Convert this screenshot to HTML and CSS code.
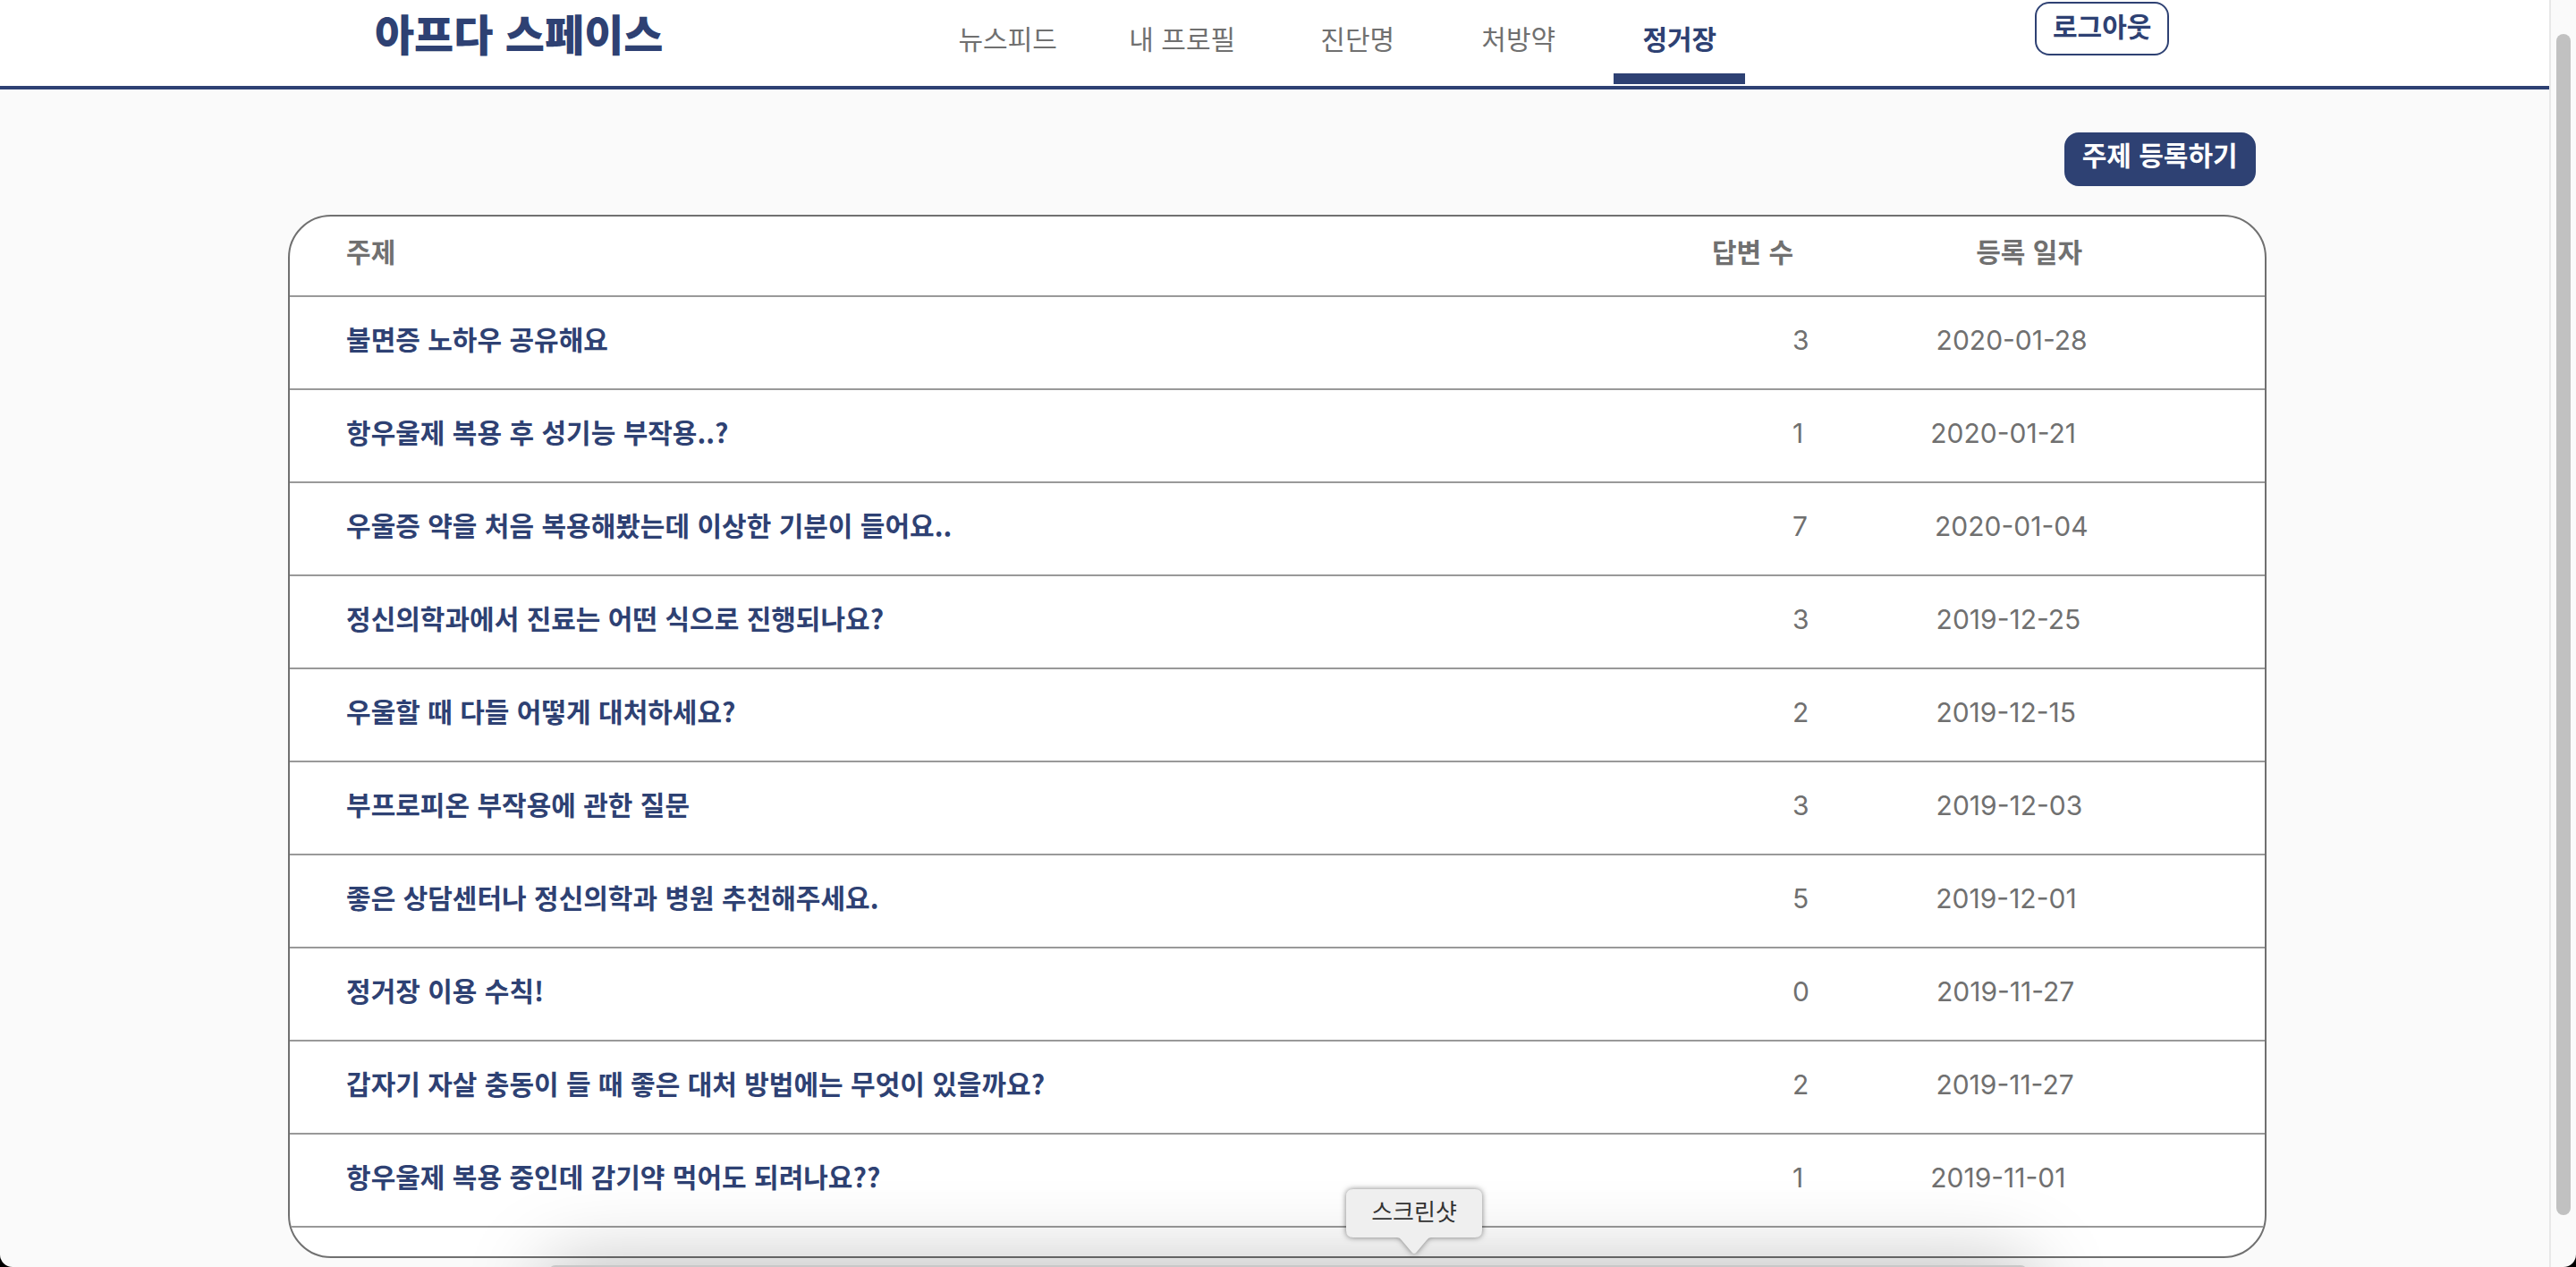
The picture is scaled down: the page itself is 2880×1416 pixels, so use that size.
FILE: index.html
```
<!DOCTYPE html>
<html lang="ko">
<head>
<meta charset="utf-8">
<title>아프다 스페이스</title>
<link rel="stylesheet" href="styles.css">
</head>
<body>
<div class="window">
  <div class="page">
    <header class="header">
      <a class="logo" href="#">아프다 스페이스</a>
      <nav class="nav">
        <a class="tab" href="#">뉴스피드</a>
        <a class="tab" href="#">내 프로필</a>
        <a class="tab" href="#">진단명</a>
        <a class="tab" href="#">처방약</a>
        <a class="tab active" href="#">정거장</a>
      </nav>
      <button class="btn logout" type="button">로그아웃</button>
    </header>
    <main class="main">
      <div class="actions"><button class="btn add" type="button">주제 등록하기</button></div>
      <div class="board">
        <table class="topics">
          <thead>
            <tr><th class="subject">주제</th><th class="count">답변 수</th><th class="date">등록 일자</th></tr>
          </thead>
          <tbody>
            <tr><td class="subject"><a href="#">불면증 노하우 공유해요</a></td><td class="count">3</td><td class="date">2020-01-28</td></tr>
            <tr><td class="subject"><a href="#">항우울제 복용 후 성기능 부작용..?</a></td><td class="count">1</td><td class="date">2020-01-21</td></tr>
            <tr><td class="subject"><a href="#">우울증 약을 처음 복용해봤는데 이상한 기분이 들어요..</a></td><td class="count">7</td><td class="date">2020-01-04</td></tr>
            <tr><td class="subject"><a href="#">정신의학과에서 진료는 어떤 식으로 진행되나요?</a></td><td class="count">3</td><td class="date">2019-12-25</td></tr>
            <tr><td class="subject"><a href="#">우울할 때 다들 어떻게 대처하세요?</a></td><td class="count">2</td><td class="date">2019-12-15</td></tr>
            <tr><td class="subject"><a href="#">부프로피온 부작용에 관한 질문</a></td><td class="count">3</td><td class="date">2019-12-03</td></tr>
            <tr><td class="subject"><a href="#">좋은 상담센터나 정신의학과 병원 추천해주세요.</a></td><td class="count">5</td><td class="date">2019-12-01</td></tr>
            <tr><td class="subject"><a href="#">정거장 이용 수칙!</a></td><td class="count">0</td><td class="date">2019-11-27</td></tr>
            <tr><td class="subject"><a href="#">갑자기 자살 충동이 들 때 좋은 대처 방법에는 무엇이 있을까요?</a></td><td class="count">2</td><td class="date">2019-11-27</td></tr>
            <tr><td class="subject"><a href="#">항우울제 복용 중인데 감기약 먹어도 되려나요??</a></td><td class="count">1</td><td class="date">2019-11-01</td></tr>
          </tbody>
        </table>
      </div>
    </main>
  </div>
  <div class="scrollbar"><div class="thumb"></div></div>
  <div class="dock"></div>
  <div class="tooltip" role="tooltip">
    <svg class="bubble" width="168" height="84" viewBox="0 0 168 84" aria-hidden="true">
      <path d="M16 7H152Q160 7 160 15V53Q160 61 152 61H103Q100 61 98 64L87 77Q84 81 81 77L70 64Q68 61 65 61H16Q8 61 8 53V15Q8 7 16 7Z"/>
    </svg>
    <span class="tip-text">스크린샷</span>
  </div>
</div>
</body>
</html>
```
FILE: styles.css
```
* { box-sizing: border-box; }
html { background: #000; }
body {
  margin: 0;
  color: #707070;
  font: 400 30px/48px "Noto Sans CJK KR", sans-serif;
}
a { color: inherit; text-decoration: none; }

.window {
  position: relative;
  display: grid;
  grid-template-columns: 1fr 30px;
  min-height: 100vh;
  overflow: hidden;
  border-radius: 0 0 14px 14px;
  background: #fafafa;
}

/* Top bar */
.header {
  display: grid;
  grid-template-columns: 618fr 929fr 457fr;
  align-items: start;
  height: 100px;
  padding: 0 14.9% 0 14.7%;
  border-bottom: 4px solid #2e4173;
  background: #fff;
}
.logo {
  padding-top: 6px;
  color: #2e4173;
  font-size: 48px;
  font-weight: 900;
  line-height: 60px;
  white-space: nowrap;
}
.nav {
  display: grid;
  grid-template-columns: 178fr 212fr 180fr 180fr 180fr;
  justify-items: center;
}
.tab {
  padding: 18px 32px 16px;
  border-bottom: 12px solid transparent;
  white-space: nowrap;
}
.tab.active {
  border-color: #2e4173;
  color: #2e4173;
  font-weight: 700;
}
.btn {
  border: 2px solid #2e4173;
  border-radius: 16px;
  padding: 6px 18px 14px;
  font: inherit;
  font-weight: 700;
  line-height: 36px;
  white-space: nowrap;
}
.logout {
  justify-self: end;
  margin-top: 2px;
  background: #fff;
  color: #2e4173;
}
.add {
  padding: 4px 18px 16px;
  background: #2e4173;
  color: #fff;
}

/* Topic board */
.main { padding: 48px 11.1% 0 11.3%; }
.actions {
  display: flex;
  justify-content: flex-end;
  padding: 0 12px 32px;
}
.board {
  overflow: hidden;
  padding-bottom: 32px;
  border: 2px solid #707070;
  border-radius: 48px;
  background: #fff;
}
.topics, .topics thead, .topics tbody { display: block; }
.topics tr {
  display: flex;
  align-items: baseline;
  padding: 22px 0 32px 63px;
  border-bottom: 2px solid #999;
}
.topics thead tr { padding: 14px 0 26px 63px; }
.topics th, .topics td {
  padding: 0;
  text-align: left;
  white-space: nowrap;
}
.subject {
  width: 75.4%;
  color: #2e4173;
  font-weight: 700;
}
.topics td.count, .topics td.date {
  font-family: Inter, "Noto Sans CJK KR", sans-serif;
  line-height: 40px;
}
td.date { margin-left: 142px; }
.topics th.subject { width: 71.2%; color: #707070; }
th.date { margin-left: 204px; }

/* Browser scrollbar */
.scrollbar {
  padding: 38px 6px 58px;
  border-left: 2px solid #e8e8e8;
}
.thumb {
  height: 100%;
  width: 16px;
  border-radius: 8px;
  background: #c1c1c1;
}

/* Dock rising from the bottom of the screen, with its label */
.dock {
  position: absolute;
  left: 21.3%;
  right: 21.3%;
  bottom: -118px;
  height: 120px;
  border-radius: 8px;
  background: #c8c8c8;
  box-shadow: 0 0 90px rgba(0, 0, 0, 0.26);
}
.tooltip {
  position: absolute;
  left: 1497px;
  bottom: 10px;
  width: 168px;
  height: 84px;
  color: #333;
  font-size: 26px;
  line-height: 38px;
  text-align: center;
}
.bubble {
  position: absolute;
  left: 0;
  top: 0;
  overflow: visible;
  fill: #efefef;
  filter: drop-shadow(0 0 3px rgba(0, 0, 0, 0.5));
}
.tip-text {
  position: relative;
  display: block;
  padding-top: 12px;
}
```
